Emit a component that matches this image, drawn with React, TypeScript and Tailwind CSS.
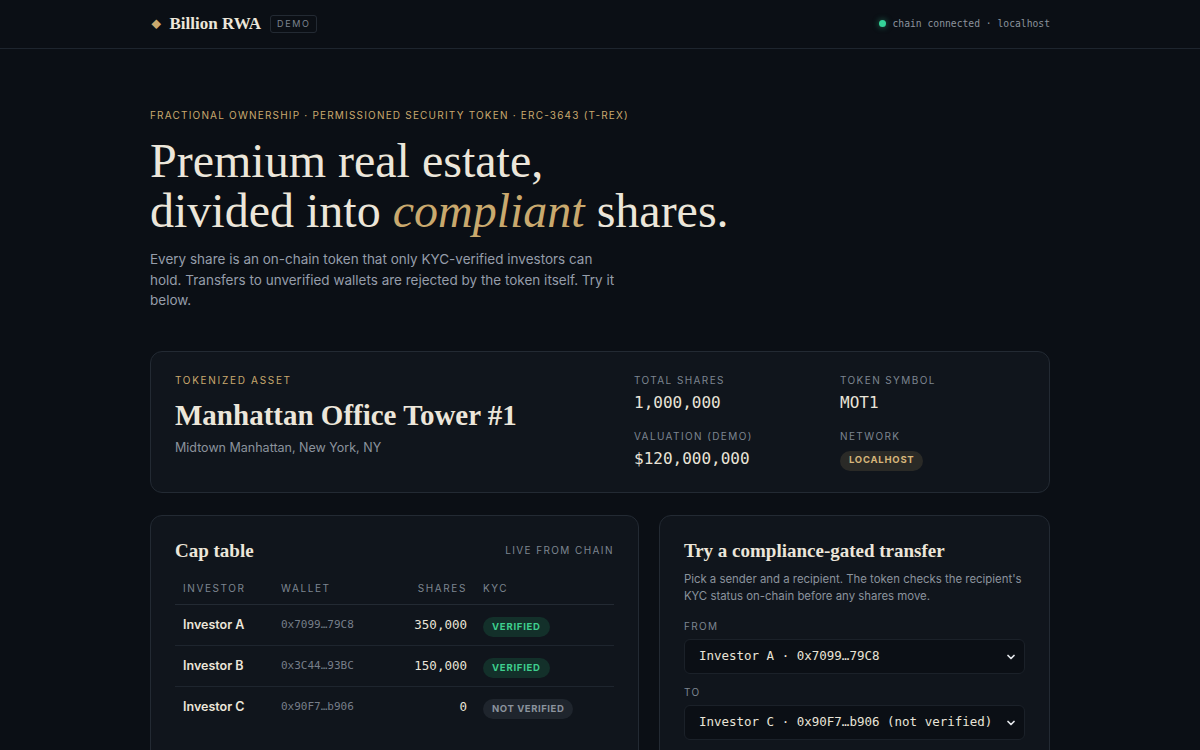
import { FC } from "react";

const serif = { fontFamily: '"Liberation Serif", "DejaVu Serif", serif' };
const mono = { fontFamily: '"DejaVu Sans Mono", "Liberation Mono", monospace' };

type Holder = { name: string; wallet: string; shares: string; verified: boolean };

const holders: Holder[] = [
  { name: "Investor A", wallet: "0x7099…79C8", shares: "350,000", verified: true },
  { name: "Investor B", wallet: "0x3C44…93BC", shares: "150,000", verified: true },
  { name: "Investor C", wallet: "0x90F7…b906", shares: "0", verified: false },
];

const Chevron: FC = () => (
  <svg width="12" height="12" viewBox="0 0 24 24" fill="none" stroke="#e5e7eb" strokeWidth="3.5" strokeLinecap="round" strokeLinejoin="round">
    <path d="M6 9l6 6 6-6" />
  </svg>
);

const Stat: FC<{ label: string; value: string }> = ({ label, value }) => (
  <div>
    <div className="text-[10px] tracking-[0.14em] text-[#7d8590] leading-4">{label}</div>
    <div className="text-[16px] text-[#e9e4d8] mt-[3px] leading-6" style={mono}>{value}</div>
  </div>
);

const App: FC = () => {
  return (
    <div className="min-h-[750px] bg-[#0b0f15] text-[#e9e4d8]" style={{ fontFamily: 'Inter, "Noto Sans", sans-serif' }}>
      <header className="border-b border-[#1e252e]">
        <div className="w-[900px] mx-auto h-12 flex items-center justify-between">
          <div className="flex items-center">
            <span className="text-[#c9a96e] text-[10px] ml-[1px] mr-[8px]">◆</span>
            <span className="text-[17px] font-bold text-[#ece6da]" style={serif}>Billion RWA</span>
            <span className="ml-[9px] px-[6px] h-[18px] flex items-center border border-[#232a33] rounded-[3px] text-[9px] tracking-[0.18em] text-[#7d8590]">DEMO</span>
          </div>
          <div className="flex items-center text-[9.7px] text-[#8b939d]" style={mono}>
            <span className="w-[7px] h-[7px] rounded-full bg-[#34d399] mr-[7px] shadow-[0_0_6px_#34d39988]"></span>
            chain connected · localhost
          </div>
        </div>
      </header>

      <main className="w-[900px] mx-auto">
        <section className="pt-[58px]">
          <div className="text-[10px] tracking-[0.12em] text-[#c9a96e] leading-4">
            FRACTIONAL OWNERSHIP · PERMISSIONED SECURITY TOKEN · ERC-3643 (T-REX)
          </div>
          <h1 className="mt-[13px] text-[48px] leading-[50px] text-[#ece6da]" style={serif}>
            Premium real estate,
            <br />
            divided into <em className="text-[#c9a96e]">compliant</em> shares.
          </h1>
          <p className="mt-[13px] w-[470px] text-[13.5px] leading-[20.5px] text-[#959daa]">
            Every share is an on-chain token that only KYC-verified investors can hold. Transfers to unverified wallets are rejected by the token itself. Try it below.
          </p>
        </section>

        <section className="mt-[40px] h-[142px] rounded-xl border border-[#232a33] bg-[#10151c] px-6 pt-[20px] flex">
          <div className="w-[459px]">
            <div className="text-[10px] tracking-[0.17em] text-[#c9a96e] leading-4">TOKENIZED ASSET</div>
            <div className="mt-[11px] text-[29px] leading-8 font-bold text-[#ece6da]" style={serif}>Manhattan Office Tower #1</div>
            <div className="mt-[8px] text-[12.5px] text-[#8b939d]">Midtown Manhattan, New York, NY</div>
          </div>
          <div className="grid grid-cols-[206px_1fr] gap-y-[13px] content-start">
            <Stat label="TOTAL SHARES" value="1,000,000" />
            <Stat label="TOKEN SYMBOL" value="MOT1" />
            <Stat label="VALUATION (DEMO)" value="$120,000,000" />
            <div>
              <div className="text-[10px] tracking-[0.14em] text-[#7d8590] leading-4">NETWORK</div>
              <div className="mt-[7px] inline-flex items-center h-[20px] px-[9px] rounded-full bg-[#2a2a27] text-[9.5px] font-bold tracking-[0.08em] text-[#d6b57a]">LOCALHOST</div>
            </div>
          </div>
        </section>

        <section className="mt-[22px] grid grid-cols-[1.25fr_1fr] gap-5">
          <div className="rounded-xl border border-[#232a33] bg-[#10151c] px-6 pt-[21px] pb-[20px]">
            <div className="flex items-center justify-between">
              <h2 className="text-[19px] font-bold text-[#ece6da]" style={serif}>Cap table</h2>
              <span className="text-[10px] tracking-[0.14em] text-[#7d8590]">LIVE FROM CHAIN</span>
            </div>
            <table className="w-full mt-[16px] border-collapse">
              <thead>
                <tr className="border-b border-[#232a33] text-[10px] tracking-[0.16em] text-[#7d8590]">
                  <th className="text-left font-normal px-2 pb-[8px] w-[98px]">INVESTOR</th>
                  <th className="text-left font-normal px-2 pb-[8px] w-[116px]">WALLET</th>
                  <th className="text-right font-normal px-2 pb-[8px] w-[86px]">SHARES</th>
                  <th className="text-left font-normal px-2 pb-[8px]">KYC</th>
                </tr>
              </thead>
              <tbody>
                {holders.map((h, i) => (
                  <tr key={h.name} className={i < holders.length - 1 ? "border-b border-[#1e252e] h-[41px]" : "h-[41px]"}>
                    <td className="px-2 text-[12.5px] font-semibold text-[#ece6da]">{h.name}</td>
                    <td className="px-2 text-[11px] text-[#767e89]" style={mono}>{h.wallet}</td>
                    <td className="px-2 text-right text-[12.5px] text-[#e9e4d8]" style={mono}>{h.shares}</td>
                    <td className="px-2 align-middle">
                      {h.verified ? (
                        <span className="inline-flex align-middle items-center h-[20px] px-[9px] rounded-full bg-[#13302a] text-[9.5px] font-bold tracking-[0.08em] text-[#3ecf8e]">VERIFIED</span>
                      ) : (
                        <span className="inline-flex align-middle items-center h-[20px] px-[9px] rounded-full bg-[#1f252d] text-[9.5px] font-bold tracking-[0.06em] text-[#8b939d]">NOT VERIFIED</span>
                      )}
                    </td>
                  </tr>
                ))}
              </tbody>
            </table>
          </div>

          <div className="rounded-xl border border-[#232a33] bg-[#10151c] px-6 pt-[21px] pb-6">
            <h2 className="text-[19px] font-bold text-[#ece6da]" style={serif}>Try a compliance-gated transfer</h2>
            <p className="mt-[6px] text-[11.4px] leading-[17px] text-[#8b939d]">
              Pick a sender and a recipient. The token checks the recipient's KYC status on-chain before any shares move.
            </p>
            <div className="mt-[14px] text-[10px] tracking-[0.14em] text-[#7d8590]">FROM</div>
            <div className="mt-[5px] h-[35px] rounded-md border border-[#1b2129] bg-[#0b0f15] pl-[14px] pr-[7px] flex items-center justify-between text-[12.5px] text-[#e9e4d8]" style={mono}>
              <span>Investor A · 0x7099…79C8</span>
              <Chevron />
            </div>
            <div className="mt-[11px] text-[10px] tracking-[0.14em] text-[#7d8590]">TO</div>
            <div className="mt-[5px] h-[35px] rounded-md border border-[#1b2129] bg-[#0b0f15] pl-[14px] pr-[7px] flex items-center justify-between text-[12.5px] text-[#e9e4d8]" style={mono}>
              <span>Investor C · 0x90F7…b906 (not verified)</span>
              <Chevron />
            </div>
          </div>
        </section>
      </main>
    </div>
  );
};

export default App;
